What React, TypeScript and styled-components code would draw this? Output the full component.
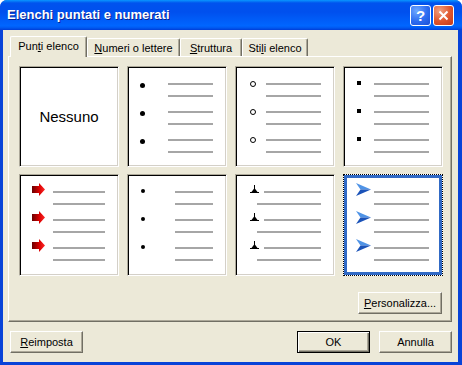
import React from 'react';
import styled, { createGlobalStyle, css } from 'styled-components';

const GlobalStyle = createGlobalStyle`
  html, body {
    margin: 0;
    padding: 0;
    background: #ffffff;
  }
  body {
    font-family: "Liberation Sans", Arial, sans-serif;
  }
`;

const Window = styled.div`
  width: 462px;
  height: 365px;
  display: flex;
  flex-direction: column;
  background: #0843d8;
  border-radius: 7px 7px 0 0;
  overflow: hidden;
`;

const TitleBar = styled.div`
  height: 30px;
  flex: none;
  display: flex;
  align-items: center;
  gap: 2px;
  padding: 0 8px 0 7px;
  background: linear-gradient(
    180deg,
    #0997ff 0%,
    #0053ee 10%,
    #0050ee 40%,
    #0066ff 86%,
    #0058f0 93%,
    #003dd7 100%
  );
`;

const Title = styled.div`
  flex: 1;
  color: #fff;
  font: bold 13px "Liberation Sans", Arial, sans-serif;
  text-shadow: 1px 1px #0a1f8f;
  padding-bottom: 1px;
`;

const CaptionButton = styled.div<{ $variant: 'help' | 'close' }>`
  width: 21px;
  height: 21px;
  box-sizing: border-box;
  border: 1px solid #fff;
  border-radius: 3px;
  display: flex;
  align-items: center;
  justify-content: center;
  color: #fff;
  font: bold 15px "Liberation Sans", Arial, sans-serif;
  background: ${(p) =>
    p.$variant === 'help'
      ? 'radial-gradient(circle at 30% 25%, #6ea8ff 0%, #2d6cf0 55%, #1a4fd6 100%)'
      : 'radial-gradient(circle at 30% 25%, #f0a080 0%, #e0552c 55%, #c4391a 100%)'};
`;

const Frame = styled.div`
  flex: 1;
  display: flex;
  padding: 0 4px 3px 3px;
`;

const Body = styled.div`
  flex: 1;
  display: flex;
  flex-direction: column;
  background: #ece9d8;
  padding: 6px 6px 9px 5px;
  font-size: 11px;
  color: #000;
`;

const TabStrip = styled.div`
  display: flex;
  align-items: flex-end;
  height: 20px;
  padding-left: 2px;
`;

const Tab = styled.div<{ $active?: boolean; $w: number }>`
  width: ${(p) => p.$w}px;
  height: 18px;
  box-sizing: border-box;
  display: flex;
  align-items: center;
  justify-content: center;
  background: #ece9d8;
  border-top: 1px solid #fff;
  border-left: 1px solid #fff;
  border-right: 1px solid #716f64;
  box-shadow: inset -1px 0 #aca899;
  border-radius: 2px 2px 0 0;
  white-space: nowrap;
  ${(p) =>
    p.$active &&
    css`
      height: 21px;
      position: relative;
      z-index: 1;
      margin-bottom: -1px;
      padding-bottom: 2px;
    `}
`;

const Panel = styled.div`
  display: flex;
  flex-direction: column;
  border: 1px solid;
  border-color: #fff #716f64 #716f64 #fff;
  box-shadow: inset -1px -1px #aca899;
  padding: 9px 8px 7px 10px;
`;

const Gallery = styled.div`
  display: grid;
  grid-template-columns: repeat(4, 100px);
  grid-template-rows: 101px 102px;
  column-gap: 8px;
  row-gap: 7px;
`;

const Cell = styled.div<{ $selected?: boolean }>`
  box-sizing: border-box;
  background: #fff;
  border: 1px solid;
  border-color: #aca899 #fff #fff #aca899;
  box-shadow: inset 1px 1px #000, inset -1px -1px #d4d0c8;
  padding: 11px 13px 0 0;
  display: flex;
  flex-direction: column;
  ${(p) =>
    p.$selected &&
    css`
      border: 1px dotted #000;
      box-shadow: inset 0 0 0 3px #316ac5;
    `}
`;

const EmptyCell = styled(Cell)`
  padding: 0;
  align-items: center;
  justify-content: center;
  font: 15px "Liberation Sans", Arial, sans-serif;
`;

const Item = styled.div`
  display: flex;
  flex-direction: column;
  margin-bottom: 4px;
`;

const ItemRow = styled.div<{ $indent: number }>`
  height: 12px;
  display: flex;
  align-items: center;
  padding-left: ${(p) => p.$indent}px;
`;

const MarkerSlot = styled.div<{ $w: number; $lift: number }>`
  width: ${(p) => p.$w}px;
  flex: none;
  display: flex;
  align-items: center;
  transform: translateY(${(p) => -p.$lift}px);
`;

const Line = styled.div`
  flex: 1;
  height: 2px;
  background: #a6a6a6;
`;

const Dot = styled.span<{ $size: number }>`
  display: block;
  width: ${(p) => p.$size}px;
  height: ${(p) => p.$size}px;
  border-radius: 50%;
  background: #000;
`;

const Ring = styled.span`
  display: block;
  width: 6px;
  height: 6px;
  box-sizing: border-box;
  border: 1px solid #000;
  border-radius: 50%;
`;

const Square = styled.span`
  display: block;
  width: 4px;
  height: 4px;
  background: #000;
`;

const Actions = styled.div`
  display: flex;
  justify-content: flex-end;
  margin-top: 16px;
  padding-right: 1px;
`;

const Footer = styled.div`
  display: flex;
  align-items: center;
  gap: 9px;
  margin-top: 9px;
  padding-left: 2px;
`;

const Spacer = styled.div`
  flex: 1;
`;

const Button = styled.div<{ $w?: number; $default?: boolean }>`
  width: ${(p) => p.$w ?? 73}px;
  height: 22px;
  box-sizing: border-box;
  display: flex;
  align-items: center;
  justify-content: center;
  background: #ece9d8;
  border: 1px solid;
  border-color: #fff #716f64 #716f64 #fff;
  box-shadow: inset -1px -1px #aca899;
  white-space: nowrap;
  ${(p) =>
    p.$default &&
    css`
      border: 1px solid #000;
      box-shadow: inset 1px 1px #fff, inset -1px -1px #716f64, inset -2px -2px #aca899;
    `}
`;

const RedArrow = () => (
  <svg width="13" height="13" viewBox="0 0 13 13">
    <defs>
      <linearGradient id="redArrow" x1="0" x2="1" y1="0" y2="0">
        <stop offset="0" stopColor="#6a0000" />
        <stop offset="0.55" stopColor="#d80000" />
        <stop offset="1" stopColor="#ff2a2a" />
      </linearGradient>
    </defs>
    <path d="M0 3 H7 V0 L13 6.5 L7 13 V10 H0 Z" fill="url(#redArrow)" />
  </svg>
);

const BlueDart = () => (
  <svg width="15" height="13" viewBox="0 0 15 13">
    <path d="M0 0 L15 6.5 L4.5 6.5 Z" fill="#4f93e6" />
    <path d="M4.5 6.5 L15 6.5 L0 13 Z" fill="#1a52b8" />
  </svg>
);

const Tack = () => (
  <svg width="9" height="8" viewBox="0 0 9 8">
    <path d="M4.5 0 V5" stroke="#000" strokeWidth="1" />
    <path d="M4.5 3 L1.5 7 H7.5 Z" fill="#000" />
    <path d="M0 7.5 H9" stroke="#000" strokeWidth="1" />
  </svg>
);

type Style = {
  marker: React.ReactNode;
  markerX: number;
  lineX: number;
  line2X: number;
  lift?: number;
  selected?: boolean;
};

const styles: Style[] = [
  { marker: <Dot $size={5} />, markerX: 13, lineX: 41, line2X: 41, lift: -1 },
  { marker: <Ring />, markerX: 15, lineX: 31, line2X: 31 },
  { marker: <Square />, markerX: 14, lineX: 31, line2X: 31, lift: 1 },
  { marker: <RedArrow />, markerX: 13, lineX: 34, line2X: 34, lift: 3 },
  { marker: <Dot $size={4} />, markerX: 14, lineX: 48, line2X: 48, lift: 1 },
  { marker: <Tack />, markerX: 15, lineX: 29, line2X: 22, lift: 3 },
  { marker: <BlueDart />, markerX: 13, lineX: 31, line2X: 31, lift: 3, selected: true },
];

const BulletPreview = ({ s }: { s: Style }) => (
  <Cell $selected={s.selected}>
    {[0, 1, 2].map((i) => (
      <Item key={i}>
        <ItemRow $indent={s.markerX - 1}>
          <MarkerSlot $w={s.lineX - s.markerX} $lift={s.lift ?? 0}>
            {s.marker}
          </MarkerSlot>
          <Line />
        </ItemRow>
        <ItemRow $indent={s.line2X - 1}>
          <Line />
        </ItemRow>
      </Item>
    ))}
  </Cell>
);

export default function App() {
  return (
    <>
      <GlobalStyle />
      <Window>
        <TitleBar>
          <Title>Elenchi puntati e numerati</Title>
          <CaptionButton $variant="help">?</CaptionButton>
          <CaptionButton $variant="close">
            <svg width="11" height="11" viewBox="0 0 11 11">
              <path d="M1.5 1.5 L9.5 9.5 M9.5 1.5 L1.5 9.5" stroke="#fff" strokeWidth="2" />
            </svg>
          </CaptionButton>
        </TitleBar>
        <Frame>
          <Body>
            <TabStrip>
              <Tab $active $w={77}>
                Pun<u>t</u>i elenco
              </Tab>
              <Tab $w={93}>
                <u>N</u>umeri o lettere
              </Tab>
              <Tab $w={62}>
                <u>S</u>truttura
              </Tab>
              <Tab $w={66}>
                Sti<u>l</u>i elenco
              </Tab>
            </TabStrip>
            <Panel>
              <Gallery>
                <EmptyCell>Nessuno</EmptyCell>
                {styles.map((s, i) => (
                  <BulletPreview key={i} s={s} />
                ))}
              </Gallery>
              <Actions>
                <Button $w={84}>
                  <u>P</u>ersonalizza...
                </Button>
              </Actions>
            </Panel>
            <Footer>
              <Button>
                <u>R</u>eimposta
              </Button>
              <Spacer />
              <Button $default>OK</Button>
              <Button>Annulla</Button>
            </Footer>
          </Body>
        </Frame>
      </Window>
    </>
  );
}
